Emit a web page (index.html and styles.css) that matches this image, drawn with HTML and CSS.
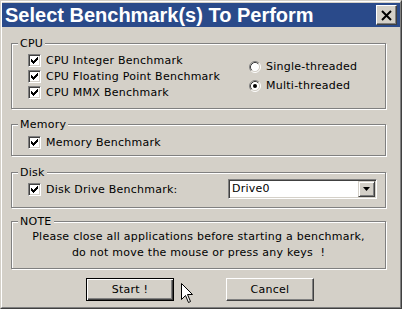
FILE: index.html
```html
<!DOCTYPE html>
<html lang="en">
<head>
    <meta charset="UTF-8">
    <title>Select Benchmark(s) To Perform</title>
    <link rel="stylesheet" href="styles.css">
</head>
<body>
    <div class="window">
        <div class="frame">
            <div class="titlebar">
                <span class="title">Select Benchmark(s) To Perform</span>
                <button class="close" type="button">
                    <svg width="11" height="11" viewBox="0 0 11 11"><path d="M1 1 L10 10 M10 1 L1 10" stroke="#000" stroke-width="2"/></svg>
                </button>
            </div>
            <div class="content">
                <fieldset class="group cpu">
                    <legend>CPU</legend>
                    <div class="cpu-body">
                        <div class="checks">
                            <label class="check"><span class="box"><svg width="7" height="7" viewBox="0 0 7 7"><polygon points="0,2 1,2 1,3 2,3 2,4 3,4 3,3 4,3 4,2 5,2 5,1 6,1 6,0 7,0 7,3 6,3 6,4 5,4 5,5 4,5 4,6 3,6 3,7 2,7 2,6 1,6 1,5 0,5" fill="#000"/></svg></span>CPU Integer Benchmark</label>
                            <label class="check"><span class="box"><svg width="7" height="7" viewBox="0 0 7 7"><polygon points="0,2 1,2 1,3 2,3 2,4 3,4 3,3 4,3 4,2 5,2 5,1 6,1 6,0 7,0 7,3 6,3 6,4 5,4 5,5 4,5 4,6 3,6 3,7 2,7 2,6 1,6 1,5 0,5" fill="#000"/></svg></span>CPU Floating Point Benchmark</label>
                            <label class="check"><span class="box"><svg width="7" height="7" viewBox="0 0 7 7"><polygon points="0,2 1,2 1,3 2,3 2,4 3,4 3,3 4,3 4,2 5,2 5,1 6,1 6,0 7,0 7,3 6,3 6,4 5,4 5,5 4,5 4,6 3,6 3,7 2,7 2,6 1,6 1,5 0,5" fill="#000"/></svg></span>CPU MMX Benchmark</label>
                        </div>
                        <div class="radios">
                            <label class="radio">
                                <svg width="12" height="12" viewBox="0 0 12 12">
                                    <circle cx="6" cy="6" r="4.5" fill="#fff"/>
                                    <path d="M2.11 9.89 A5.5 5.5 0 0 1 9.89 2.11" fill="none" stroke="#808080"/>
                                    <path d="M9.89 2.11 A5.5 5.5 0 0 1 2.11 9.89" fill="none" stroke="#fff"/>
                                    <path d="M2.82 9.18 A4.5 4.5 0 0 1 9.18 2.82" fill="none" stroke="#404040"/>
                                    <path d="M9.18 2.82 A4.5 4.5 0 0 1 2.82 9.18" fill="none" stroke="#d4d0c8"/>
                                </svg>Single-threaded</label>
                            <label class="radio">
                                <svg width="12" height="12" viewBox="0 0 12 12">
                                    <circle cx="6" cy="6" r="4.5" fill="#fff"/>
                                    <path d="M2.11 9.89 A5.5 5.5 0 0 1 9.89 2.11" fill="none" stroke="#808080"/>
                                    <path d="M9.89 2.11 A5.5 5.5 0 0 1 2.11 9.89" fill="none" stroke="#fff"/>
                                    <path d="M2.82 9.18 A4.5 4.5 0 0 1 9.18 2.82" fill="none" stroke="#404040"/>
                                    <path d="M9.18 2.82 A4.5 4.5 0 0 1 2.82 9.18" fill="none" stroke="#d4d0c8"/>
                                    <circle cx="6" cy="6" r="2" fill="#000"/>
                                </svg>Multi-threaded</label>
                        </div>
                    </div>
                </fieldset>

                <fieldset class="group memory">
                    <legend>Memory</legend>
                    <label class="check"><span class="box"><svg width="7" height="7" viewBox="0 0 7 7"><polygon points="0,2 1,2 1,3 2,3 2,4 3,4 3,3 4,3 4,2 5,2 5,1 6,1 6,0 7,0 7,3 6,3 6,4 5,4 5,5 4,5 4,6 3,6 3,7 2,7 2,6 1,6 1,5 0,5" fill="#000"/></svg></span>Memory Benchmark</label>
                </fieldset>

                <fieldset class="group disk">
                    <legend>Disk</legend>
                    <div class="disk-row">
                        <label class="check"><span class="box"><svg width="7" height="7" viewBox="0 0 7 7"><polygon points="0,2 1,2 1,3 2,3 2,4 3,4 3,3 4,3 4,2 5,2 5,1 6,1 6,0 7,0 7,3 6,3 6,4 5,4 5,5 4,5 4,6 3,6 3,7 2,7 2,6 1,6 1,5 0,5" fill="#000"/></svg></span>Disk Drive Benchmark:</label>
                        <div class="select">
                            <span class="select-value">Drive0</span>
                            <span class="select-arrow"><svg width="7" height="4" viewBox="0 0 7 4"><polygon points="0,0 7,0 3.5,4" fill="#000"/></svg></span>
                        </div>
                    </div>
                </fieldset>

                <fieldset class="group note">
                    <legend>NOTE</legend>
                    <p class="note-text">Please close all applications before starting a benchmark,<br>do not move the mouse or press any keys&nbsp; !</p>
                </fieldset>

                <div class="buttons">
                    <button class="btn default" type="button">Start !</button>
                    <button class="btn" type="button">Cancel</button>
                </div>
            </div>
        </div>
        <svg class="cursor" width="13" height="20" viewBox="0 0 13 20">
            <path d="M0.5 0.5 L0.5 16.5 L4.5 12.5 L7.5 19.5 L9.5 18.5 L6.5 11.5 L11.5 11.5 Z" fill="#fff" stroke="#000"/>
        </svg>
    </div>
</body>
</html>
```

FILE: styles.css
```css
body {
    margin: 0;
    font-family: "DejaVu Sans", sans-serif;
    font-size: 11px;
    letter-spacing: 0.25px;
    color: #000;
}

.window {
    position: relative;
    width: 402px;
    height: 309px;
    box-sizing: border-box;
    background-color: #d4d0c8;
    border: 1px solid;
    border-color: #d4d0c8 #404040 #404040 #d4d0c8;
}

.frame {
    height: 100%;
    box-sizing: border-box;
    border: 1px solid;
    border-color: #ffffff #808080 #808080 #ffffff;
    padding-top: 1px;
}

.titlebar {
    display: flex;
    align-items: center;
    height: 24px;
    padding: 0 3px 0 3px;
    background-color: #2a4a8a;
    color: #ffffff;
}

.title {
    flex: 1;
    font-family: "Liberation Sans", Arial, sans-serif;
    font-weight: bold;
    font-size: 20px;
    letter-spacing: 0;
    white-space: nowrap;
}

.close {
    display: flex;
    align-items: center;
    justify-content: center;
    width: 21px;
    height: 20px;
    padding: 0;
    background-color: #d4d0c8;
    border: 1px solid;
    border-color: #ffffff #404040 #404040 #ffffff;
    box-shadow: inset -1px -1px #808080;
}

.content {
    padding: 10px 0 0 9px;
}

.group {
    width: 375px;
    box-sizing: border-box;
    min-width: 0;
    margin: 0;
    padding: 0;
    border: 1px solid #808080;
    box-shadow: inset 1px 1px #ffffff, 1px 1px #ffffff;
}

.group legend {
    margin-left: 6px;
    padding: 0 2px;
    line-height: 13px;
    background-color: #d4d0c8;
}

.check {
    display: flex;
    align-items: center;
    gap: 5px;
    height: 16px;
    white-space: nowrap;
}

.box {
    display: flex;
    align-items: center;
    justify-content: center;
    width: 13px;
    height: 13px;
    box-sizing: border-box;
    background-color: #ffffff;
    border: 1px solid;
    border-color: #808080 #ffffff #ffffff #808080;
    box-shadow: inset 1px 1px #404040, inset -1px -1px #d4d0c8;
}

/* CPU */
.cpu {
    padding-bottom: 8px;
}

.cpu-body {
    display: grid;
    grid-template-columns: 221px auto;
    padding: 2px 0 0 16px;
}

.radios {
    align-self: center;
}

.radio {
    display: flex;
    align-items: center;
    gap: 5px;
    height: 19px;
}

/* Memory */
.memory {
    margin-top: 9px;
    padding: 3px 0 5px 16px;
}

.memory legend {
    margin-left: -10px;
}

/* Disk */
.disk {
    margin-top: 10px;
    padding: 0 8px 8px 16px;
}

.disk legend {
    margin-left: -10px;
}

.disk-row {
    display: flex;
    align-items: center;
    justify-content: space-between;
    height: 20px;
}

.select {
    display: flex;
    width: 149px;
    height: 20px;
    box-sizing: border-box;
    background-color: #ffffff;
    border: 1px solid;
    border-color: #808080 #ffffff #ffffff #808080;
    box-shadow: inset 1px 1px #404040, inset -1px -1px #d4d0c8;
    padding: 1px;
}

.select-value {
    flex: 1;
    padding-left: 2px;
    line-height: 16px;
}

.select-arrow {
    display: flex;
    align-items: center;
    justify-content: center;
    width: 17px;
    height: 16px;
    box-sizing: border-box;
    background-color: #d4d0c8;
    border: 1px solid;
    border-color: #d4d0c8 #404040 #404040 #d4d0c8;
    box-shadow: inset 1px 1px #ffffff, inset -1px -1px #808080;
}

/* Note */
.note {
    margin-top: 7px;
    padding: 1px 0 7px;
}

.note-text {
    margin: 0;
    line-height: 16px;
    text-align: center;
    white-space: nowrap;
}

/* Buttons */
.buttons {
    display: flex;
    gap: 52px;
    margin-top: 9px;
    padding-left: 75px;
}

.btn {
    width: 88px;
    height: 23px;
    padding: 0;
    font-family: "DejaVu Sans", sans-serif;
    font-size: 11px;
    letter-spacing: 0.25px;
    color: #000;
    background-color: #d4d0c8;
    border: 1px solid;
    border-color: #ffffff #404040 #404040 #ffffff;
    box-shadow: inset -1px -1px #808080;
}

.btn.default {
    border-color: #000000;
    box-shadow: inset 1px 1px #ffffff, inset -1px -1px #404040, inset -2px -2px #808080;
}

.cursor {
    position: absolute;
    left: 180px;
    top: 282px;
}
```
